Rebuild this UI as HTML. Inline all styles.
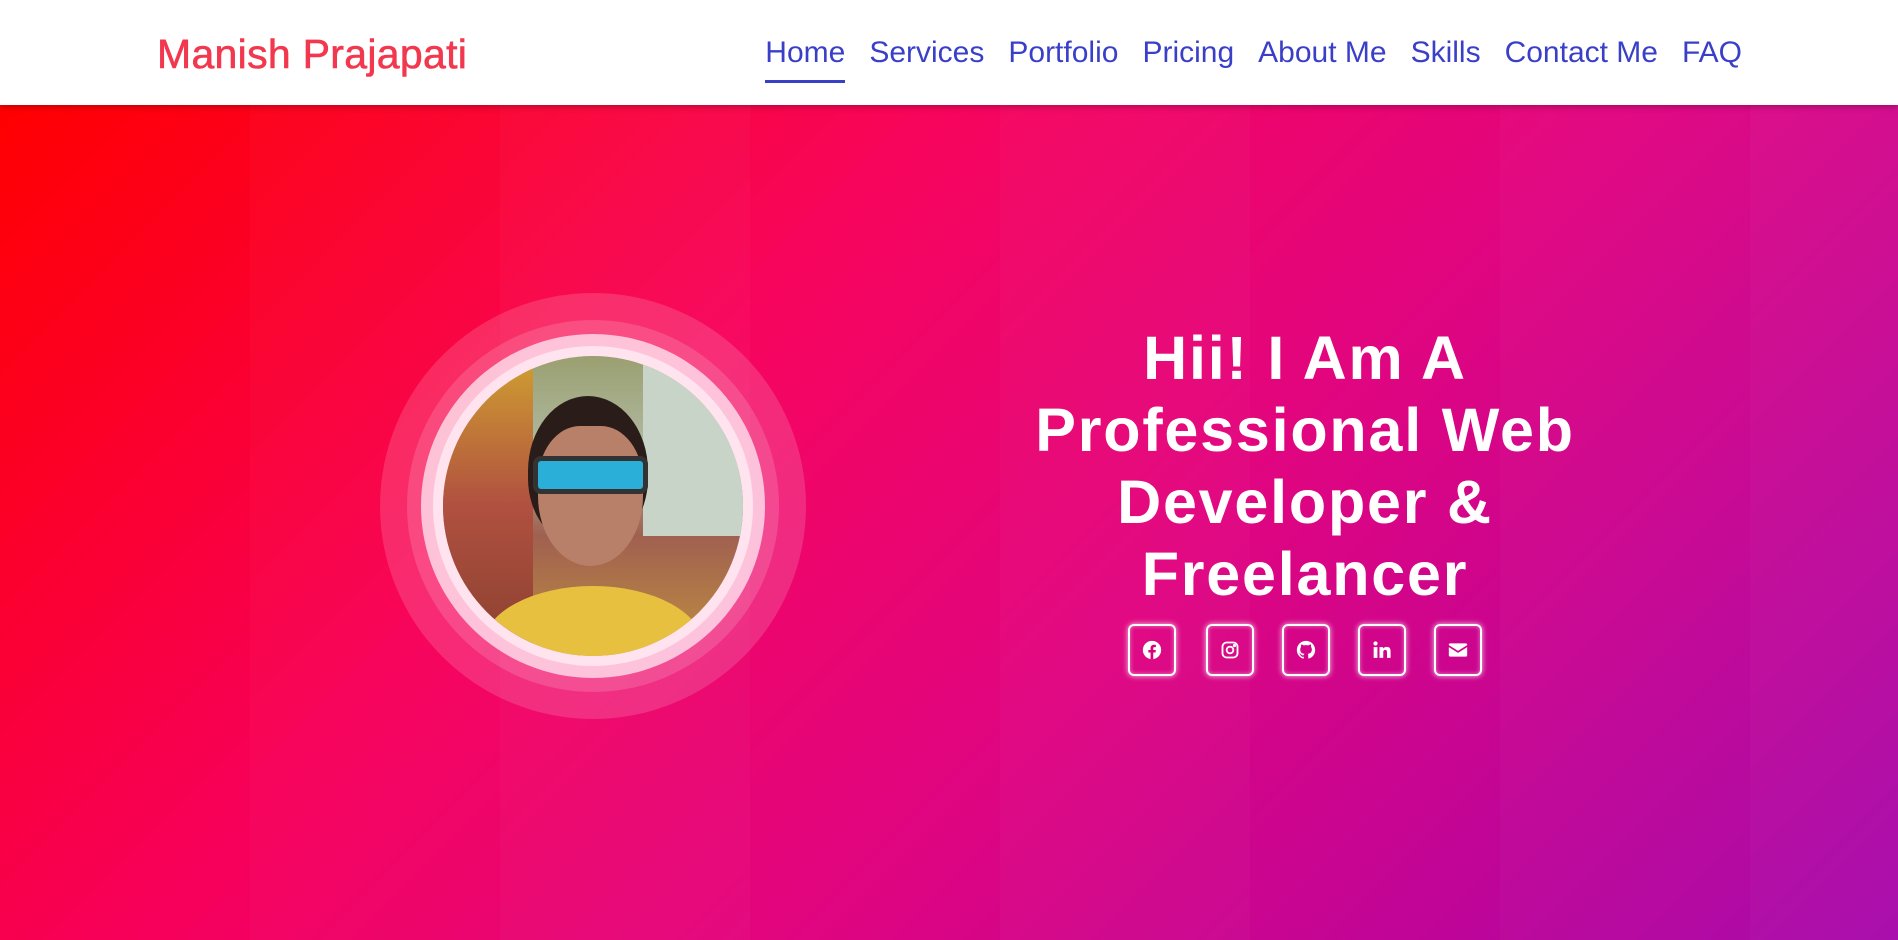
<!DOCTYPE html>
<html><head><meta charset="utf-8"><style>
*{margin:0;padding:0;box-sizing:border-box}
body{width:1898px;height:940px;overflow:hidden;font-family:"Liberation Sans",sans-serif;position:relative}
.nav{position:absolute;top:0;left:0;width:1898px;height:105px;background:#fff;z-index:3;box-shadow:0 2px 6px rgba(0,0,0,.25)}
.logo{position:absolute;left:157px;top:31px;font-size:41px;color:#f2384f;letter-spacing:.3px;-webkit-text-stroke:.6px #f2384f}
.links{position:absolute;right:156px;top:36px;display:flex;gap:24px;font-size:30px;color:#3a3fc8}
.links span{position:relative}
.links .act:after{content:"";position:absolute;left:0;right:0;top:44px;height:3px;background:#3a3fc8}
.hero{position:absolute;top:105px;left:0;width:1898px;height:835px;background:linear-gradient(135deg,#ff0000 0%,#f7005a 35%,#e0007e 60%,#a400a8 100%)}
.hero .s{position:absolute;top:0;height:835px;width:250px}
.ring{position:absolute;border-radius:50%}
h1{position:absolute;left:1005px;width:600px;top:322px;text-align:center;color:#fff;font-size:61px;line-height:72px;font-weight:bold;letter-spacing:1.8px}
.ic{position:absolute;top:624px;width:48px;height:52px;border:2px solid #fff;border-radius:6px;box-shadow:0 0 6px rgba(255,255,255,.8),inset 0 0 4px rgba(255,255,255,.5);display:flex;align-items:center;justify-content:center}
</style></head><body>
<div class="nav"><div class="logo">Manish Prajapati</div>
<div class="links"><span class="act">Home</span><span>Services</span><span>Portfolio</span><span>Pricing</span><span>About Me</span><span>Skills</span><span>Contact Me</span><span>FAQ</span></div></div>
<div class="hero">
<div class="s" style="left:250px;background:rgba(255,255,255,.02)"></div>
<div class="s" style="left:500px;background:rgba(255,255,255,.04)"></div>
<div class="s" style="left:750px;background:rgba(255,255,255,.02)"></div>
<div class="s" style="left:1000px;background:rgba(255,255,255,.04)"></div>
<div class="s" style="left:1250px;background:rgba(255,255,255,.02)"></div>
<div class="s" style="left:1500px;background:rgba(255,255,255,.04)"></div>
<div class="s" style="left:1750px;background:rgba(255,255,255,.06)"></div>
</div>
<div class="ring" style="left:380px;top:293px;width:426px;height:426px;background:rgba(255,255,255,.15)"></div>
<div class="ring" style="left:407px;top:320px;width:372px;height:372px;background:rgba(255,255,255,.15)"></div>
<div class="ring" style="left:421px;top:334px;width:344px;height:344px;background:rgba(255,225,238,.8)"></div>
<div class="ring" style="left:433px;top:346px;width:320px;height:320px;background:#ffe3ee"></div>
<div class="ring" style="left:443px;top:356px;width:300px;height:300px;overflow:hidden;background:linear-gradient(180deg,#9aa070 0%,#b0b8a0 30%,#a06050 60%,#c09040 100%)">
<div style="position:absolute;left:0;top:0;width:90px;height:300px;background:linear-gradient(180deg,#d0a030,#b05040 50%,#8a4030)"></div>
<div style="position:absolute;left:200px;top:0;width:100px;height:180px;background:#c8d4c8"></div>
<div style="position:absolute;left:85px;top:40px;width:120px;height:150px;border-radius:50% 50% 45% 45%;background:#2a1c18"></div>
<div style="position:absolute;left:95px;top:70px;width:105px;height:140px;border-radius:40% 40% 50% 50%;background:#b88068"></div>
<div style="position:absolute;left:90px;top:100px;width:115px;height:38px;border-radius:8px;background:#2ab0d8;border:5px solid #333"></div>
<div style="position:absolute;left:40px;top:230px;width:220px;height:120px;border-radius:50%;background:#e8c040"></div>
</div>
<h1>Hii! I Am A Professional Web Developer &amp; Freelancer</h1>
<div class="ic" style="left:1128px"><svg width="20" height="20" viewBox="0 0 24 24"><circle cx="12" cy="12" r="11" fill="#fff"/><path d="M13.5 23v-8h2.7l.4-3h-3.1v-2c0-.9.3-1.5 1.6-1.5h1.6V5.8c-.3 0-1.3-.1-2.4-.1-2.4 0-4 1.4-4 4.1V12H7.6v3h2.7v8z" fill="#d8007e"/></svg></div>
<div class="ic" style="left:1206px"><svg width="20" height="20" viewBox="0 0 24 24" fill="none" stroke="#fff" stroke-width="2.2"><rect x="3" y="3" width="18" height="18" rx="5"/><circle cx="12" cy="12" r="4"/><circle cx="17.3" cy="6.7" r=".8" fill="#fff"/></svg></div>
<div class="ic" style="left:1282px"><svg width="20" height="20" viewBox="0 0 24 24"><path fill="#fff" d="M12 1C5.9 1 1 5.9 1 12c0 4.9 3.2 9 7.5 10.4.6.1.8-.2.8-.5v-2c-3.1.7-3.7-1.4-3.7-1.4-.5-1.3-1.2-1.6-1.2-1.6-1-.7.1-.7.1-.7 1.1.1 1.7 1.1 1.7 1.1 1 1.7 2.6 1.2 3.2.9.1-.7.4-1.2.7-1.5-2.4-.3-5-1.2-5-5.4 0-1.2.4-2.2 1.1-3-.1-.3-.5-1.4.1-2.9 0 0 .9-.3 3 1.1a10 10 0 0 1 5.5 0c2.1-1.4 3-1.1 3-1.1.6 1.5.2 2.6.1 2.9.7.8 1.1 1.8 1.1 3 0 4.2-2.6 5.1-5 5.4.4.3.7 1 .7 2v3c0 .3.2.6.8.5C19.8 21 23 16.9 23 12 23 5.9 18.1 1 12 1z"/></svg></div>
<div class="ic" style="left:1358px"><svg width="20" height="20" viewBox="0 0 24 24" fill="#fff"><rect x="2" y="8.5" width="4.5" height="13"/><circle cx="4.2" cy="4.2" r="2.5"/><path d="M9 8.5h4.3v1.9c.6-1.1 2.1-2.2 4.2-2.2 4.4 0 4.8 2.8 4.8 6.3v7H18v-6.2c0-1.5 0-3.4-2.1-3.4s-2.4 1.6-2.4 3.3v6.3H9z"/></svg></div>
<div class="ic" style="left:1434px"><svg width="20" height="16" viewBox="0 0 24 18" fill="#fff"><path d="M1 2.5C1 1.7 1.7 1 2.5 1h19c.8 0 1.5.7 1.5 1.5v.6L12 10 1 3.1z"/><path d="M1 5.5l11 7 11-7V15.5c0 .8-.7 1.5-1.5 1.5h-19C1.7 17 1 16.3 1 15.5z"/></svg></div>
</body></html>
